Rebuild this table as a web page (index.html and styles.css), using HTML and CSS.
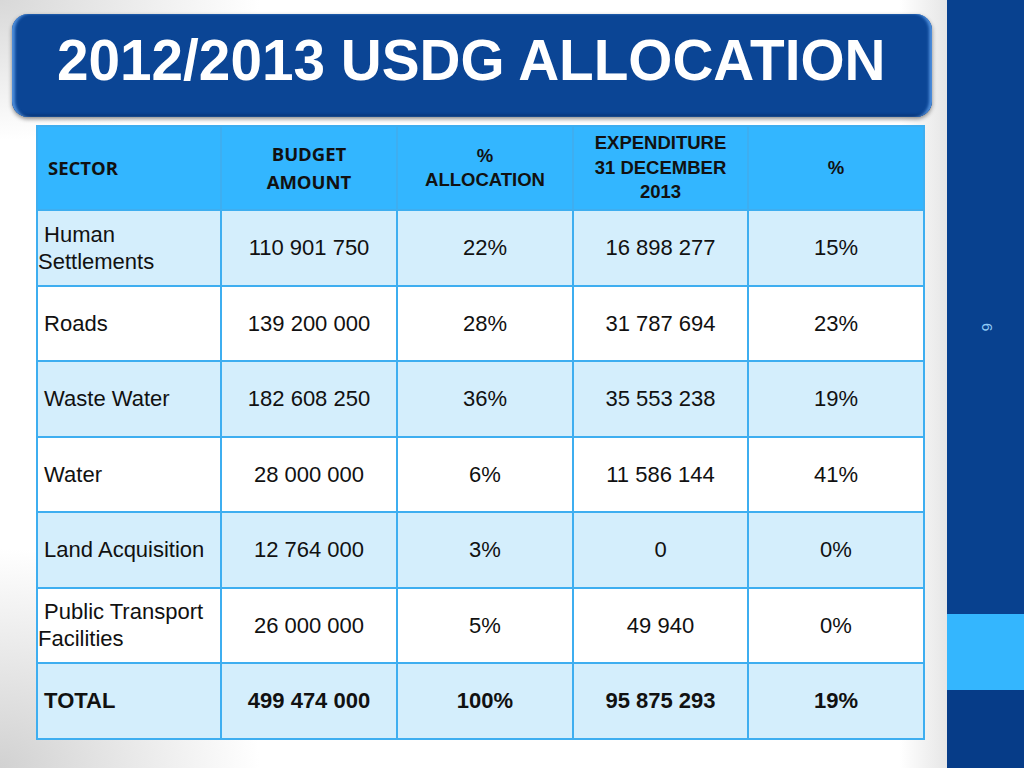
FILE: index.html
```html
<!DOCTYPE html>
<html lang="en">
<head>
<meta charset="utf-8">
<title>2012/2013 USDG Allocation</title>
<link rel="stylesheet" href="styles.css">
</head>
<body>
<div class="slide">
  <main class="content">
    <header class="banner">
      <h1 class="title">2012/2013 USDG ALLOCATION</h1>
    </header>
    <table class="alloc">
      <colgroup>
        <col class="c1"><col class="c2"><col class="c3"><col class="c4"><col class="c5">
      </colgroup>
      <thead>
        <tr>
          <th class="h-left cal">SECTOR</th>
          <th class="cal">BUDGET<br>AMOUNT</th>
          <th>%<br>ALLOCATION</th>
          <th>EXPENDITURE<br>31 DECEMBER<br>2013</th>
          <th>%</th>
        </tr>
      </thead>
      <tbody>
        <tr class="tint">
          <td class="sector">&nbsp;Human Settlements</td>
          <td>110 901 750</td><td>22%</td><td>16 898 277</td><td>15%</td>
        </tr>
        <tr>
          <td class="sector">&nbsp;Roads</td>
          <td>139 200 000</td><td>28%</td><td>31 787 694</td><td>23%</td>
        </tr>
        <tr class="tint">
          <td class="sector">&nbsp;Waste Water</td>
          <td>182 608 250</td><td>36%</td><td>35 553 238</td><td>19%</td>
        </tr>
        <tr>
          <td class="sector">&nbsp;Water</td>
          <td>28 000 000</td><td>6%</td><td>11 586 144</td><td>41%</td>
        </tr>
        <tr class="tint">
          <td class="sector">&nbsp;Land Acquisition</td>
          <td>12 764 000</td><td>3%</td><td>0</td><td>0%</td>
        </tr>
        <tr>
          <td class="sector">&nbsp;Public Transport Facilities</td>
          <td>26 000 000</td><td>5%</td><td>49 940</td><td>0%</td>
        </tr>
        <tr class="tint total">
          <td class="sector">&nbsp;TOTAL</td>
          <td>499 474 000</td><td>100%</td><td>95 875 293</td><td>19%</td>
        </tr>
      </tbody>
    </table>
  </main>
  <aside class="sidebar">
    <div class="pagenum"><span class="num">6</span></div>
    <div class="accent"></div>
    <div class="foot"></div>
  </aside>
</div>
</body>
</html>
```

FILE: styles.css
```css
* { box-sizing: border-box; }

html, body {
  margin: 0;
  padding: 0;
}

body {
  width: 1024px;
  height: 768px;
  overflow: hidden;
  font-family: "Liberation Sans", Arial, sans-serif;
}

.slide {
  display: flex;
  width: 1024px;
  height: 768px;
  background:
    radial-gradient(ellipse 260px 220px at 0 768px, rgba(190,190,190,0.7), rgba(255,255,255,0) 100%),
    radial-gradient(ellipse 260px 140px at 0 0, rgba(200,200,200,0.7), rgba(255,255,255,0) 100%),
    linear-gradient(to right, #ffffff 0, #ffffff 900px, #e6e6e6 947px);
}

.content {
  width: 947px;
  padding-top: 14px;
}

.banner {
  margin: 0 15px 0 12px;
  height: 103px;
  border-radius: 16px;
  background: #0b4595;
  box-shadow:
    inset 4px 0 3px -1px #4f8fdc,
    inset -4px 0 3px -1px #4f8fdc,
    inset 0 -3px 3px -1px #062f6d,
    0 2px 4px rgba(0,0,0,0.45);
  padding: 15px 0 0 45px;
}

.title {
  margin: 0;
  color: #ffffff;
  font-family: "Liberation Sans", Arial, sans-serif;
  font-weight: bold;
  font-size: 56.7px;
  line-height: 64px;
  white-space: nowrap;
}

.alloc {
  margin: 8px 0 0 36px;
  width: 887px;
  border-collapse: collapse;
  table-layout: fixed;
  border: 2px solid #3eaef0;
}

.c1 { width: 184px; }
.c2 { width: 176px; }
.c3 { width: 176px; }
.c4 { width: 175px; }
.c5 { width: 176px; }

.alloc th,
.alloc td {
  border: 2px solid #3eaef0;
  text-align: center;
  vertical-align: middle;
  color: #111111;
  padding: 0;
}

.alloc thead tr {
  height: 84px;
}

.alloc th {
  background: #33b6ff;
  font-family: "Liberation Sans", Arial, sans-serif;
  font-weight: bold;
  font-size: 18.5px;
  line-height: 24.5px;
}

.alloc th.cal {
  font-family: "Open Sans", "Lato", "Liberation Sans", sans-serif;
  font-weight: 700;
  font-size: 18.5px;
  line-height: 28px;
  padding-top: 0;
}

.alloc th.h-left {
  text-align: left;
  padding-left: 10px;
}

.alloc tbody tr {
  height: 75.5px;
  background: #ffffff;
}

.alloc tbody tr.tint {
  background: #d4eefc;
}

.alloc td {
  font-size: 22px;
  line-height: 27px;
}

.alloc td.sector {
  text-align: left;
  padding-left: 0;
  padding-right: 4px;
}

.alloc tr.total td {
  font-weight: bold;
}

.sidebar {
  width: 77px;
  display: flex;
  flex-direction: column;
  background: #08418f;
}

.pagenum {
  height: 614px;
  padding-top: 317px;
  text-align: center;
}

.num {
  display: inline-block;
  writing-mode: vertical-rl;
  color: #8fcaf6;
  font-family: "Liberation Sans", Arial, sans-serif;
  font-size: 15px;
  line-height: 1;
  margin-left: 4px;
}

.accent {
  height: 76px;
  background: #34b6fe;
}

.foot {
  flex: 1;
  background: #063c88;
}
```
